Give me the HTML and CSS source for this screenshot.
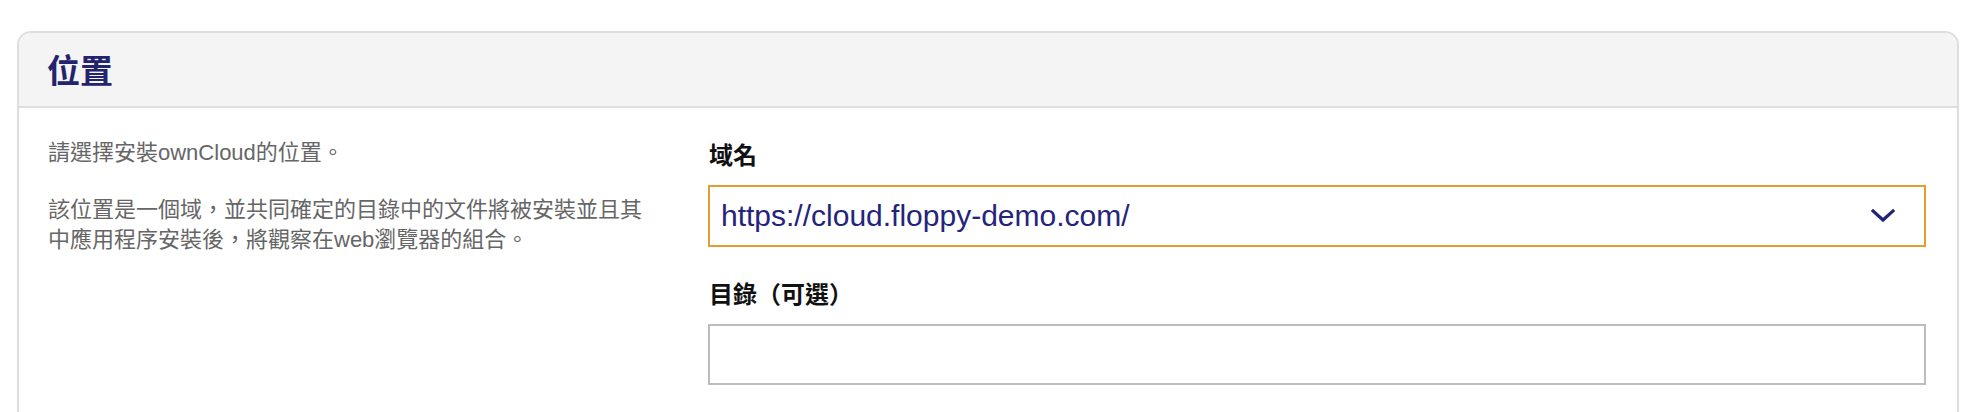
FILE: index.html
```html
<!DOCTYPE html>
<html lang="zh-Hant">
<head>
<meta charset="utf-8">
<title>位置</title>
<link rel="stylesheet" href="styles.css">
</head>
<body>
<div class="page">
  <section class="card">
    <header class="card-header">
      <h2 class="card-title">位置</h2>
    </header>
    <div class="card-body">
      <div class="desc">
        <p class="desc-text">請選擇安裝ownCloud的位置。</p>
        <p class="desc-text">該位置是一個域，並共同確定的目錄中的文件將被安裝並且其中應用程序安裝後，將觀察在web瀏覽器的組合。</p>
      </div>
      <div class="fields">
        <div class="field">
          <label class="field-label">域名</label>
          <div class="select">
            <span class="select-value">https://cloud.floppy-demo.com/</span>
            <svg class="chevron" width="24" height="14" viewBox="0 0 24 14" aria-hidden="true">
              <path d="M2 2 L12 11 L22 2" fill="none" stroke="#23237a" stroke-width="3.2" stroke-linecap="square" stroke-linejoin="miter"/>
            </svg>
          </div>
        </div>
        <div class="field">
          <label class="field-label">目錄（可選）</label>
          <div class="input"></div>
        </div>
      </div>
    </div>
  </section>
</div>
</body>
</html>
```
FILE: styles.css
```css
html, body {
  margin: 0;
  padding: 0;
  background: #ffffff;
}
body {
  font-family: "Liberation Sans", "Noto Sans CJK TC", sans-serif;
  overflow: hidden;
}
.page {
  padding: 31px 15px 0 17px;
}
.card {
  border: 2px solid #dedede;
  border-radius: 14px;
  background: #ffffff;
  overflow: hidden;
}
.card-header {
  background: #f4f4f4;
  border-bottom: 2px solid #dedede;
  padding: 17px 28px;
}
.card-title {
  margin: 0;
  font-family: "Noto Sans CJK TC", sans-serif;
  font-size: 33px;
  line-height: 39px;
  font-weight: 700;
  color: #23236e;
}
.card-body {
  display: grid;
  grid-template-columns: 610px 1fr;
  column-gap: 50px;
  padding: 30px 31px 60px 29px;
}
.desc-text {
  margin: 0 0 27px 0;
  font-size: 22px;
  line-height: 30px;
  color: #666666;
}
.fields {
  display: flex;
  flex-direction: column;
  gap: 30px;
}
.field {
  display: flex;
  flex-direction: column;
  gap: 15px;
}
.field-label {
  font-family: "Noto Sans CJK TC", sans-serif;
  font-size: 24px;
  line-height: 32px;
  font-weight: 700;
  color: #111111;
  padding-left: 1px;
}
.select {
  height: 58px;
  border: 2px solid #e29e2c;
  display: flex;
  align-items: center;
  justify-content: space-between;
  padding: 0 29px 0 11px;
}
.select-value {
  font-size: 30px;
  color: #24247a;
  font-family: "Liberation Sans", sans-serif;
}
.chevron {
  display: block;
}
.input {
  height: 57px;
  border: 2px solid #bdbdbd;
}
```
